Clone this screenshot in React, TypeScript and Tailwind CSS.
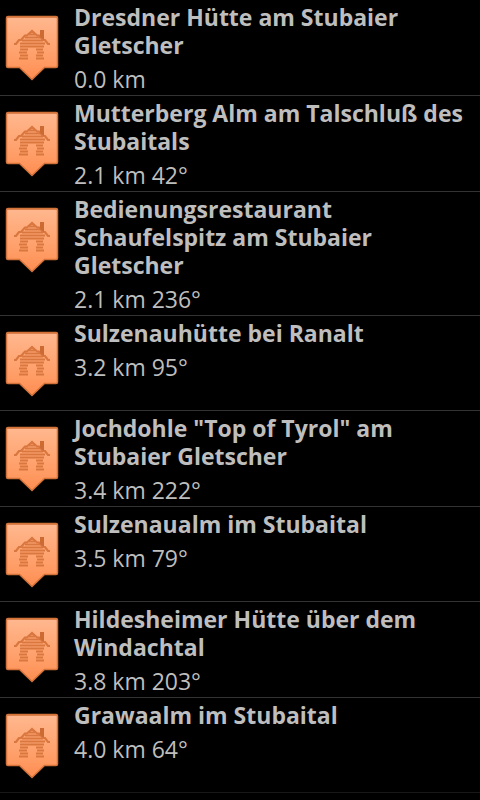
import React from 'react';

interface Hut {
  name: string;
  distance: string;
}

const huts: Hut[] = [
  { name: 'Dresdner Hütte am Stubaier Gletscher', distance: '0.0 km' },
  { name: 'Mutterberg Alm am Talschluß des Stubaitals', distance: '2.1 km 42°' },
  { name: 'Bedienungsrestaurant Schaufelspitz am Stubaier Gletscher', distance: '2.1 km 236°' },
  { name: 'Sulzenauhütte bei Ranalt', distance: '3.2 km 95°' },
  { name: 'Jochdohle "Top of Tyrol" am Stubaier Gletscher', distance: '3.4 km 222°' },
  { name: 'Sulzenaualm im Stubaital', distance: '3.5 km 79°' },
  { name: 'Hildesheimer Hütte über dem Windachtal', distance: '3.8 km 203°' },
  { name: 'Grawaalm im Stubaital', distance: '4.0 km 64°' },
];

const HutMarker: React.FC = () => (
  <svg className="w-16 h-20 shrink-0" viewBox="0 0 64 80" fill="none" aria-hidden="true">
    <defs>
      <linearGradient id="marker" x1="0" y1="0" x2="0" y2="1">
        <stop offset="0" stopColor="#ffb88f" />
        <stop offset="0.75" stopColor="#ff9a62" />
        <stop offset="1" stopColor="#ff8c50" />
      </linearGradient>
    </defs>
    <path
      d="M8 13.5H56Q57.5 13.5 57.5 15V63Q57.5 64.5 56 64.5H44.5L32 76.5L19.5 64.5H8Q6.5 64.5 6.5 63V15Q6.5 13.5 8 13.5Z"
      fill="url(#marker)"
      stroke="#d3733b"
      strokeWidth="1.5"
    />
    <path d="M7 14H57" stroke="#d3733b" strokeWidth="1.5" />
    {/* roof and chimney */}
    <path d="M14 41H16L19 37H21L25 32.5H27L32 28L37 32.5H39L43 37H45L48 41H50" stroke="#d9773f" strokeWidth="2.2" />
    <path d="M40 27H44V37L40 34Z" fill="#cc6a33" />
    {/* logs */}
    <path d="M29 31.5H35M25 34.5H40M22 37.5H43M20 40.5H45M20 43.5H44" stroke="#d9773f" strokeWidth="2" />
    <path d="M20 46.5H28M19 49.5H27M20 52.5H28M19 55.5H28" stroke="#d9773f" strokeWidth="1.8" />
    <path d="M36 46.5H43M37 49.5H44M36 52.5H43M36 55.5H44" stroke="#d9773f" strokeWidth="1.8" />
  </svg>
);

const App: React.FC = () => {
  return (
    <main className="min-h-screen bg-black text-[#bebebe] font-['Open_Sans','Noto_Sans',sans-serif]">
      <ul>
        {huts.map((hut) => (
          <li key={hut.name} className="flex min-h-[95px] gap-[10px] border-b border-[#333333] pt-[3px] pb-[2px] last:border-[#181818]">
            <HutMarker />
            <div className="min-w-0 flex-1 pr-2">
              <h2 className="text-[23px] leading-[28px] font-bold">{hut.name}</h2>
              <p className="mt-[6px] text-[23px] leading-[28px]">{hut.distance}</p>
            </div>
          </li>
        ))}
      </ul>
    </main>
  );
};

export default App;
